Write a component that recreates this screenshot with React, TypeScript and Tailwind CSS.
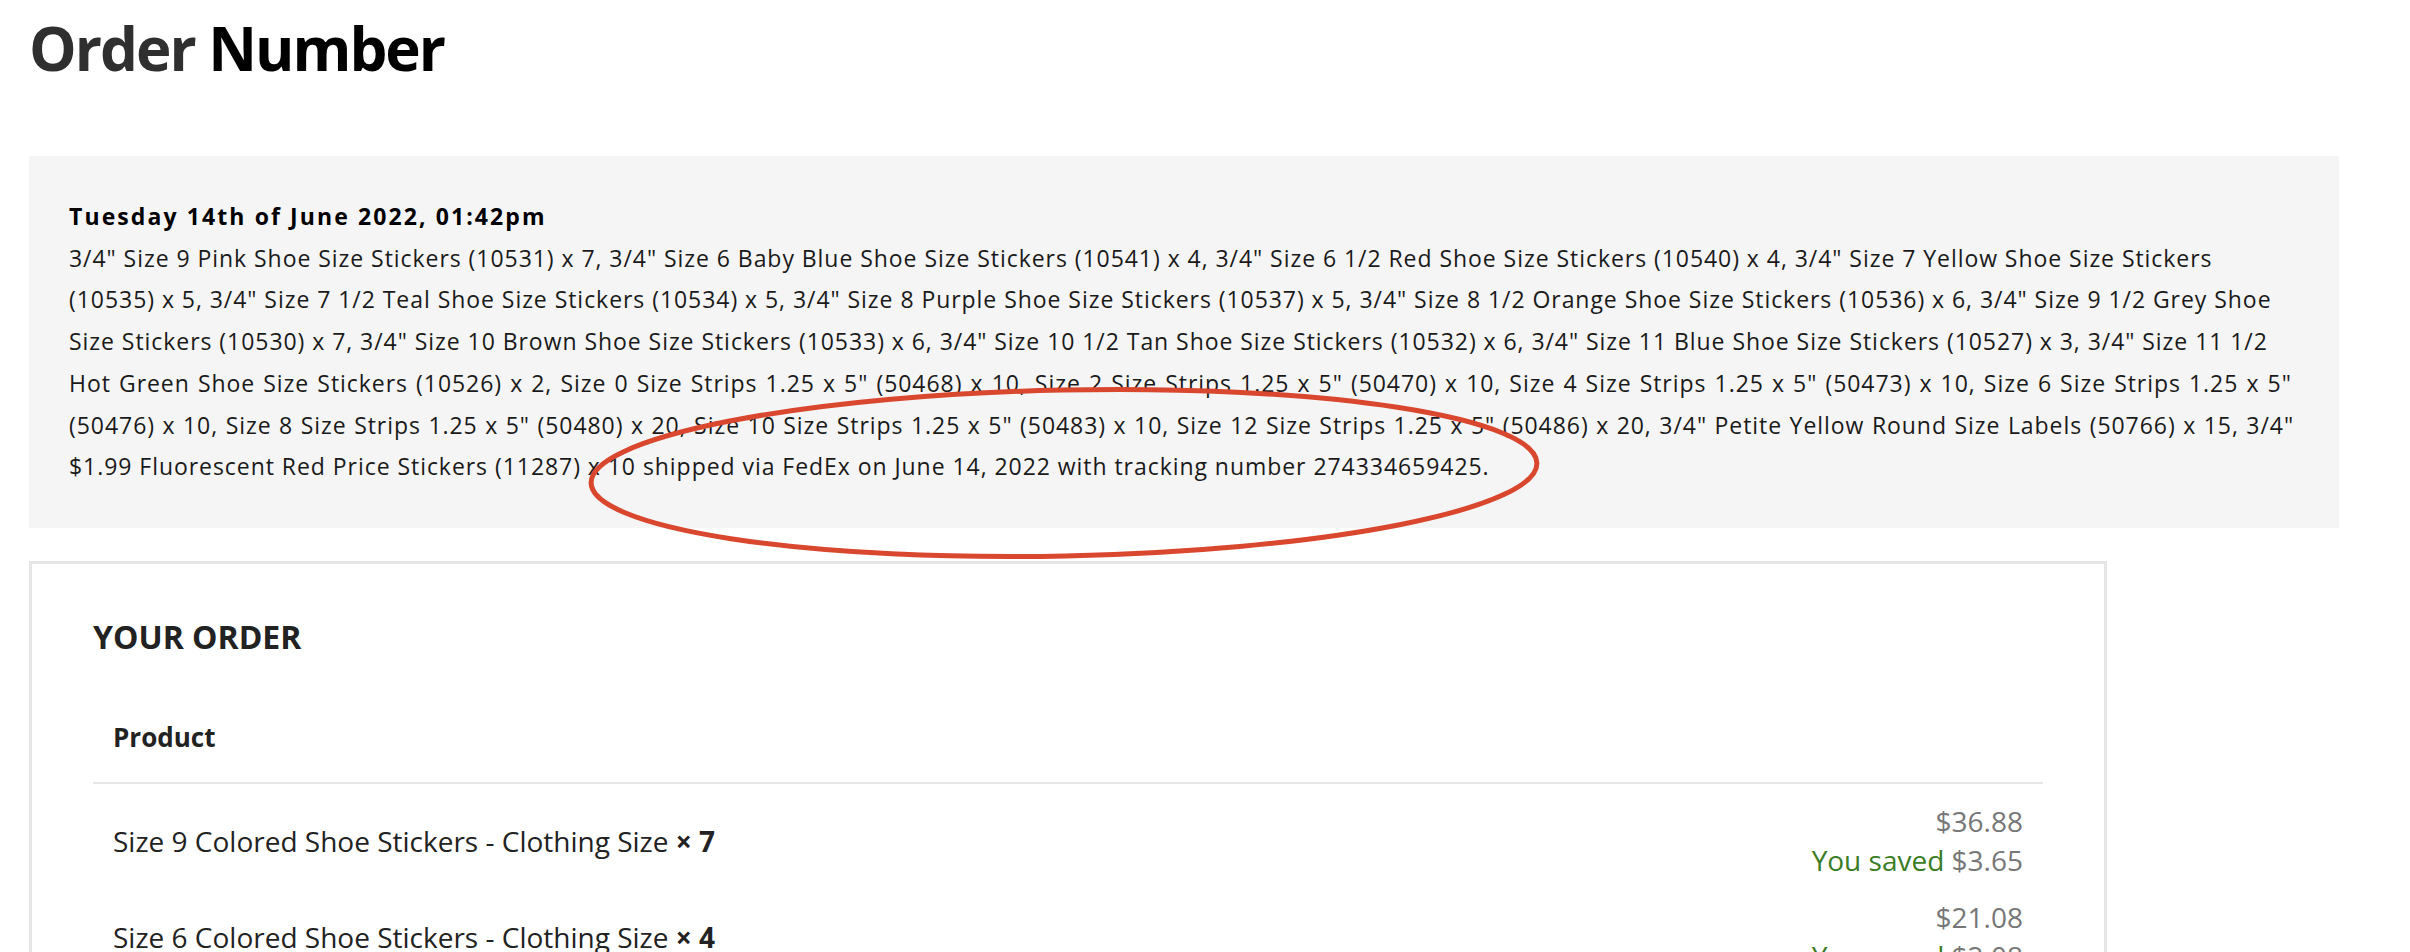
import React from "react";

const LINES: { text: string; cls?: string }[] = [
  {
    text: `3/4" Size 9 Pink Shoe Size Stickers (10531) x 7, 3/4" Size 6 Baby Blue Shoe Size Stickers (10541) x 4, 3/4" Size 6 1/2 Red Shoe Size Stickers (10540) x 4, 3/4" Size 7 Yellow Shoe Size Stickers`,
  },
  {
    text: `(10535) x 5, 3/4" Size 7 1/2 Teal Shoe Size Stickers (10534) x 5, 3/4" Size 8 Purple Shoe Size Stickers (10537) x 5, 3/4" Size 8 1/2 Orange Shoe Size Stickers (10536) x 6, 3/4" Size 9 1/2 Grey Shoe`,
  },
  {
    text: `Size Stickers (10530) x 7, 3/4" Size 10 Brown Shoe Size Stickers (10533) x 6, 3/4" Size 10 1/2 Tan Shoe Size Stickers (10532) x 6, 3/4" Size 11 Blue Shoe Size Stickers (10527) x 3, 3/4" Size 11 1/2`,
  },
  {
    text: `Hot Green Shoe Size Stickers (10526) x 2, Size 0 Size Strips 1.25 x 5" (50468) x 10, Size 2 Size Strips 1.25 x 5" (50470) x 10, Size 4 Size Strips 1.25 x 5" (50473) x 10, Size 6 Size Strips 1.25 x 5"`,
    cls: "[word-spacing:1.2px]",
  },
  {
    text: `(50476) x 10, Size 8 Size Strips 1.25 x 5" (50480) x 20, Size 10 Size Strips 1.25 x 5" (50483) x 10, Size 12 Size Strips 1.25 x 5" (50486) x 20, 3/4" Petite Yellow Round Size Labels (50766) x 15, 3/4"`,
    cls: "[word-spacing:0.6px]",
  },
  {
    text: `$1.99 Fluorescent Red Price Stickers (11287) x 10 shipped via FedEx on June 14, 2022 with tracking number 274334659425.`,
  },
];

const ROWS = [
  { name: "Size 9 Colored Shoe Stickers - Clothing Size", qty: 7, price: "$36.88", saved: "$3.65" },
  { name: "Size 6 Colored Shoe Stickers - Clothing Size", qty: 4, price: "$21.08", saved: "$2.08" },
  { name: "Size 6 1/2 Colored Shoe Stickers - Clothing Size", qty: 4, price: "$21.08", saved: "$2.08" },
];

export default function App() {
  return (
    <div className="relative h-[952px] overflow-hidden bg-white font-['Open_Sans',sans-serif] text-[#1c1c1c]">
      <div className="pl-[29px] pt-[18px]">
        <h1 className="text-[60px] font-bold leading-[60px] tracking-[-2px]">
          <span className="text-[#2f2f2f]">Order</span> <span className="text-black">Number</span>
        </h1>

        <div className="mt-[78px] w-[2310px] bg-[#f5f5f5] p-10 text-[23px] leading-[41.7px] text-[#1a1a1a]">
          <div className="font-bold tracking-[2.1px] text-black">Tuesday 14th of June 2022, 01:42pm</div>
          <p className="whitespace-nowrap tracking-[0.95px]">
            {LINES.map((l, i) => (
              <React.Fragment key={i}>
                <span className={l.cls}>{l.text}</span>
                {i < LINES.length - 1 && <br />}
              </React.Fragment>
            ))}
          </p>
        </div>

        <div className="mt-[33px] w-[2078px] border-[3px] border-[#e6e6e6] px-[61px] pt-[55px]">
          <h2 className="text-[32px] font-bold leading-[36px] text-[#222]">YOUR ORDER</h2>
          <div className="mt-[66px] border-b-2 border-[#e6e6e6] px-5 pb-[29px] text-[26px] font-bold leading-[32px] text-[#222]">
            Product
          </div>
          <div className="pt-[9px]">
            {ROWS.map((r, i) => (
              <div key={i} className="flex items-center justify-between px-5 py-[9px]">
                <div className="text-[28px] leading-[32px] text-[#222]">
                  {r.name} <span className="font-bold">× {r.qty}</span>
                </div>
                <div className="text-right text-[28px] leading-[39px] text-[#777777]">
                  <div>{r.price}</div>
                  <div>
                    <span className="text-[#3a7d24]">You saved</span> {r.saved}
                  </div>
                </div>
              </div>
            ))}
          </div>
        </div>
      </div>

      <svg
        className="pointer-events-none absolute left-0 top-0"
        width="2410"
        height="952"
        viewBox="0 0 2410 952"
      >
        <ellipse
          cx="1064"
          cy="473"
          rx="473"
          ry="83"
          fill="none"
          stroke="#d9472f"
          strokeWidth="5"
          transform="rotate(-1.2 1064 473)"
        />
      </svg>
    </div>
  );
}
